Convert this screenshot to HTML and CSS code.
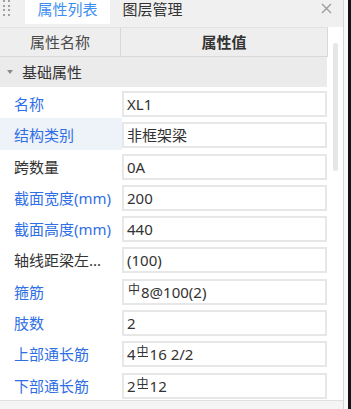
FILE: index.html
```html
<!DOCTYPE html>
<html lang="zh">
<head>
<meta charset="utf-8">
<link rel="stylesheet" href="styles.css">
</head>
<body>
<div class="frame">
  <div class="panel">
    <div class="tabs">
      <div class="grip">
        <span></span><span></span><span></span><span></span><span></span><span></span><span></span><span></span>
      </div>
      <div class="tab active">属性列表</div>
      <div class="tab">图层管理</div>
      <svg class="close" width="11" height="11" viewBox="0 0 11 11"><path d="M1 1L10 10M10 1L1 10" stroke="#9c9c9c" stroke-width="1.4" fill="none"/></svg>
    </div>
    <div class="content">
      <div class="table">
        <div class="head">
          <div class="hcell name">属性名称</div>
          <div class="hcell val">属性值</div>
        </div>
        <div class="section"><span class="caret"></span>基础属性</div>
        <div class="row"><div class="label blue">名称</div><div class="box">XL1</div></div>
        <div class="row sel"><div class="label blue">结构类别</div><div class="box">非框架梁</div></div>
        <div class="row"><div class="label">跨数量</div><div class="box">0A</div></div>
        <div class="row"><div class="label blue">截面宽度(mm)</div><div class="box">200</div></div>
        <div class="row"><div class="label blue">截面高度(mm)</div><div class="box">440</div></div>
        <div class="row"><div class="label">轴线距梁左...</div><div class="box">(100)</div></div>
        <div class="row"><div class="label blue">箍筋</div><div class="box"><span class="sym">中</span>8@100(2)</div></div>
        <div class="row"><div class="label blue">肢数</div><div class="box">2</div></div>
        <div class="row"><div class="label blue">上部通长筋</div><div class="box">4<span class="sym bar">中</span>16 2/2</div></div>
        <div class="row"><div class="label blue">下部通长筋</div><div class="box">2<span class="sym bar">中</span>12</div></div>
      </div>
      <div class="scroll"><div class="thumb"></div></div>
    </div>
    <div class="footer"></div>
  </div>
  <div class="gap"></div>
  <div class="dark"></div>
</div>
</body>
</html>
```

FILE: styles.css
```css
* { box-sizing: border-box; }
html, body { margin: 0; padding: 0; }
body {
  width: 351px;
  height: 409px;
  overflow: hidden;
  background: #fff;
  font-family: "Noto Sans", "Noto Sans CJK SC", sans-serif;
  font-size: 15px;
  color: #333;
}
.frame { display: flex; height: 409px; }
.panel {
  width: 344px;
  border-right: 1px solid #d6d6d6;
  display: flex;
  flex-direction: column;
  background: #fff;
}
.gap { width: 4px; background: #fafafa; }
.dark { width: 3px; background: #141414; }

.tabs {
  height: 27px;
  background: #f0f0f0;
  display: flex;
  position: relative;
}
.grip {
  width: 25px;
  display: grid;
  grid-template-columns: 2px 2px;
  grid-auto-rows: 2px;
  column-gap: 3px;
  row-gap: 2.5px;
  padding: 0 0 0 3px;
  align-content: start;
}
.grip span { background: #a0a0a0; width: 2px; height: 2px; }
.tab {
  width: 85px;
  height: 24px;
  line-height: 19px;
  text-align: center;
  color: #333;
}
.tab.active { background: #fff; color: #3d8ef0; }
.close {
  position: absolute;
  left: 321px;
  top: 3px;
}

.content { flex: 1; display: flex; min-height: 0; }
.table { width: 328px; display: flex; flex-direction: column; }
.head {
  height: 30px;
  display: flex;
  background: #eeeeee;
  border-top: 1px solid #e2e2e2;
  border-bottom: 1px solid #d8d8d8;
  border-right: 1px solid #d8d8d8;
}
.hcell { line-height: 28px; text-align: center; color: #4a4a4a; }
.hcell.name { width: 121px; border-right: 1px solid #d8d8d8; }
.hcell.val { flex: 1; font-weight: 600; color: #333; }
.section {
  height: 30px;
  line-height: 30px;
  background: #ebebeb;
  display: flex;
  align-items: center;
  padding-left: 7px;
  margin-right: 1px;
}
.caret {
  width: 0; height: 0;
  border-left: 3px solid transparent;
  border-right: 3px solid transparent;
  border-top: 4px solid #8a8a8a;
  margin-right: 9px;
}
.row { height: 31.33px; display: flex; }
.label {
  width: 122px;
  padding: 4px 0 0 14px;
  line-height: 26px;
  white-space: nowrap;
  color: #333;
}
.label.blue { color: #2f6fe6; }
.row.sel .label { background: #eef2f9; }
.box {
  margin-top: 4px;
  width: 205px;
  height: 26px;
  border: 2px solid #e7e7e7;
  padding-left: 3px;
  line-height: 22px;
  color: #333;
  white-space: nowrap;
}
.sym {
  display: inline-block;
  font-size: 12px;
  line-height: 12px;
  vertical-align: 4px;
  position: relative;
  margin: 0 1px;
}
.sym.bar::after {
  content: "";
  position: absolute;
  left: 1px;
  right: 1px;
  bottom: 1px;
  height: 1px;
  background: #333;
}
.scroll { flex: 1; padding: 16px 0 0 5px; }
.thumb { width: 5px; height: 128px; background: #e6e6e6; border-radius: 3px; }
.footer { height: 9px; background: #f4f4f4; border-top: 1px solid #e0e0e0; }
```
